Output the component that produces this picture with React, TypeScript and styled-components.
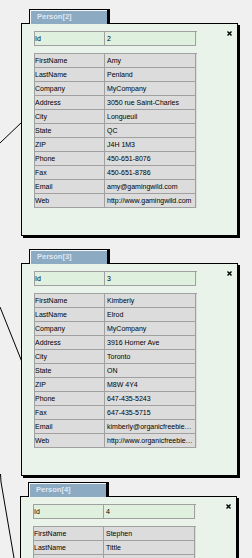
import React from "react";
import styled, { createGlobalStyle } from "styled-components";

const GlobalStyle = createGlobalStyle`
  html, body {
    margin: 0;
    padding: 0;
    background: #f0f0f0;
    overflow: hidden;
  }
`;

const Canvas = styled.div`
  position: relative;
  width: 252px;
  height: 558px;
  overflow: hidden;
  background: #f0f0f0;
  font-family: "Liberation Sans", Arial, sans-serif;
`;

const Links = styled.svg`
  position: absolute;
  left: 0;
  top: 0;
  z-index: 0;
`;

const Node = styled.div<{ $x: number; $y: number }>`
  position: absolute;
  left: ${p => p.$x}px;
  top: ${p => p.$y}px;
  z-index: 1;
  display: flex;
  flex-direction: column;
  align-items: flex-start;
`;

const Tab = styled.div`
  position: relative;
  z-index: 2;
  margin-left: 8px;
  margin-bottom: -1px;
  width: 77px;
  height: 13px;
  border: 1px solid #000;
  border-bottom: none;
  box-shadow: 2px 0 0 #000, inset 1px 1px 0 #f4f6f8;
  background: #8daac3;
  color: #dfe8f1;
  font-size: 7.5px;
  font-weight: bold;
  line-height: 14px;
  padding-left: 7px;
  box-sizing: border-box;
  width: 79px;
  height: 15px;
`;

const Body = styled.div`
  position: relative;
  z-index: 1;
  width: 217px;
  box-sizing: border-box;
  border: 1px solid #000;
  box-shadow: 2px 2px 0 #000;
  background: #e9f3e9;
  padding: 7px 0 27px 12px;
  display: flex;
  flex-direction: column;
  gap: 7px;
`;

const Close = styled.svg`
  position: absolute;
  left: 205px;
  top: 7px;
`;

const Grid = styled.div<{ $fill: string }>`
  display: grid;
  grid-template-columns: 70px 91px;
  width: 162px;
  border-top: 1px solid #a0a0a0;
  border-left: 1px solid #a0a0a0;
  background: ${p => p.$fill};
`;

const Cell = styled.div<{ $value?: boolean }>`
  height: 13px;
  border-right: 1px solid #a0a0a0;
  border-bottom: 1px solid #a0a0a0;
  padding-left: ${p => (p.$value ? "2px" : "0")};
  font-size: 7px;
  line-height: 13px;
  color: #000;
  white-space: nowrap;
  overflow: hidden;
  text-overflow: ellipsis;
`;

type Person = {
  id: number;
  fields: [string, string][];
};

const people: { x: number; y: number; p: Person }[] = [
  {
    x: 21,
    y: 9,
    p: {
      id: 2,
      fields: [
        ["FirstName", "Amy"],
        ["LastName", "Penland"],
        ["Company", "MyCompany"],
        ["Address", "3050 rue Saint-Charles"],
        ["City", "Longueuil"],
        ["State", "QC"],
        ["ZIP", "J4H 1M3"],
        ["Phone", "450-651-8076"],
        ["Fax", "450-651-8786"],
        ["Email", "amy@gamingwild.com"],
        ["Web", "http://www.gamingwild.com"],
      ],
    },
  },
  {
    x: 21,
    y: 249,
    p: {
      id: 3,
      fields: [
        ["FirstName", "Kimberly"],
        ["LastName", "Elrod"],
        ["Company", "MyCompany"],
        ["Address", "3916 Horner Ave"],
        ["City", "Toronto"],
        ["State", "ON"],
        ["ZIP", "M8W 4Y4"],
        ["Phone", "647-435-5243"],
        ["Fax", "647-435-5715"],
        ["Email", "kimberly@organicfreebies.com"],
        ["Web", "http://www.organicfreebies.com"],
      ],
    },
  },
  {
    x: 20,
    y: 482,
    p: {
      id: 4,
      fields: [
        ["FirstName", "Stephen"],
        ["LastName", "Tittle"],
        ["Company", "MyCompany"],
      ],
    },
  },
];

function PersonNode({ x, y, p }: { x: number; y: number; p: Person }) {
  return (
    <Node $x={x} $y={y}>
      <Tab>Person[{p.id}]</Tab>
      <Body>
        <Close width="5" height="5" viewBox="0 0 5 5">
          <path d="M0.5 0.5 L4.5 4.5 M4.5 0.5 L0.5 4.5" stroke="#000" strokeWidth="1.4" />
        </Close>
        <Grid $fill="#dff0df">
          <Cell>Id</Cell>
          <Cell $value>{p.id}</Cell>
        </Grid>
        <Grid $fill="#dcdcdc">
          {p.fields.map(([k, v]) => (
            <React.Fragment key={k}>
              <Cell>{k}</Cell>
              <Cell $value>{v}</Cell>
            </React.Fragment>
          ))}
        </Grid>
      </Body>
    </Node>
  );
}

export default function App() {
  return (
    <Canvas>
      <GlobalStyle />
      <Links width="252" height="558">
        <line x1="0" y1="143" x2="22" y2="122" stroke="#000" strokeWidth="1" />
        <line x1="0" y1="307" x2="22" y2="362" stroke="#000" strokeWidth="1" />
        <line x1="0.5" y1="474" x2="1" y2="482" stroke="#000" strokeWidth="1" />
        <line x1="1" y1="482" x2="14" y2="558" stroke="#000" strokeWidth="1" />
      </Links>
      {people.map(n => (
        <PersonNode key={n.p.id} {...n} />
      ))}
    </Canvas>
  );
}
